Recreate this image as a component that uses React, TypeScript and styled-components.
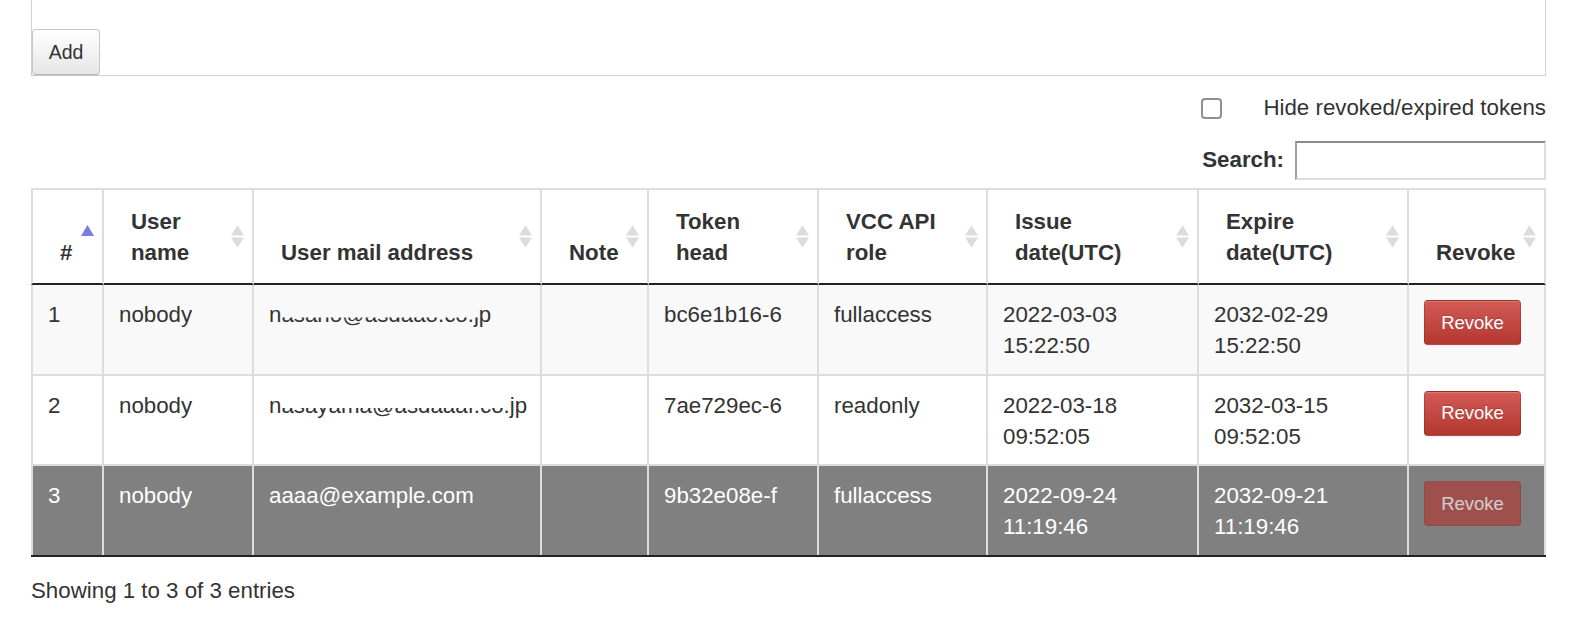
import React from "react";
import styled, { createGlobalStyle, css } from "styled-components";

const GlobalStyle = createGlobalStyle`
  html, body { margin: 0; padding: 0; background: #ffffff; }
  body {
    font-family: "Liberation Sans", Arial, Helvetica, sans-serif;
    color: #333333;
    font-size: 22.3px;
    line-height: 30.7px;
  }
`;

const Page = styled.div`
  width: 1515px;
  padding: 0 40px 0 31px;
`;

const AddPanel = styled.div`
  height: 75px;
  border: 1px solid #d0d0d0;
  border-top: none;
  display: flex;
  align-items: flex-end;
`;

const AddButton = styled.button`
  width: 68px;
  height: 46px;
  padding: 0;
  font-family: "Liberation Sans", Arial, sans-serif;
  font-size: 19.5px;
  color: #333333;
  background: linear-gradient(#ffffff, #e6e6e6);
  border: 1px solid #c8c8c8;
  border-bottom-color: #b5b5b5;
  border-radius: 4px;
  box-shadow: 0 1px 2px rgba(0, 0, 0, 0.06);
`;

const CheckRow = styled.label`
  display: flex;
  justify-content: flex-end;
  align-items: center;
  gap: 41px;
  height: 31px;
  margin-top: 17px;
`;

const CheckBox = styled.input`
  appearance: none;
  margin: 0;
  width: 21px;
  height: 21px;
  border: 2px solid #8e8e9c;
  border-radius: 4px;
  background: #ffffff;
  box-sizing: border-box;
`;

const SearchRow = styled.div`
  display: flex;
  justify-content: flex-end;
  align-items: center;
  gap: 11px;
  margin-top: 17px;
  height: 39px;
`;

const SearchLabel = styled.span`
  font-weight: bold;
`;

const SearchInput = styled.input`
  box-sizing: border-box;
  width: 251px;
  height: 39px;
  margin: 0;
  border-style: solid;
  border-width: 2px;
  border-color: #8a8a8a #dddddd #dddddd #a0a0a0;
  background: #ffffff;
  font: inherit;
`;

const Table = styled.table`
  margin-top: 8px;
  width: 1515px;
  table-layout: fixed;
  border-collapse: separate;
  border-spacing: 0;
  border-bottom: 2px solid #222222;
`;

const HeadCell = styled.th<{ $w: number }>`
  position: relative;
  box-sizing: border-box;
  width: ${(p) => p.$w}px;
  padding: 17px 30px 15px 27px;
  text-align: left;
  vertical-align: bottom;
  font-weight: bold;
  border-top: 2px solid #dddddd;
  border-right: 2px solid #dddddd;
  border-bottom: 2px solid #222222;
  &:first-child { border-left: 2px solid #dddddd; }
`;

const SortGlyph = styled.svg`
  position: absolute;
  right: 8px;
  top: 50%;
  margin-top: -11.5px;
`;

const Row = styled.tr<{ $tone: "odd" | "even" | "selected" }>`
  background: ${(p) =>
    p.$tone === "odd" ? "#f9f9f9" : p.$tone === "selected" ? "#808080" : "#ffffff"};
  color: ${(p) => (p.$tone === "selected" ? "#ffffff" : "#333333")};
  &:first-child td { border-top: none; }
`;

const Cell = styled.td`
  padding: 15px 15px 12px;
  vertical-align: top;
  border-top: 2px solid #dddddd;
  border-right: 2px solid #dddddd;
  &:first-child { border-left: 2px solid #dddddd; }
`;

const Mail = styled.span`
  white-space: nowrap;
`;

const Redacted = styled.span`
  display: inline-block;
  clip-path: inset(56% 0 0 0);
`;

const RevokeButton = styled.button<{ $disabled?: boolean }>`
  display: block;
  width: 97px;
  height: 45px;
  padding: 0;
  font-family: "Liberation Sans", Arial, sans-serif;
  font-size: 18.5px;
  color: #ffffff;
  border: 1px solid rgba(0, 0, 0, 0.15);
  border-radius: 4px;
  background: linear-gradient(#d35b56, #b3372f);
  text-shadow: 0 -1px 0 rgba(0, 0, 0, 0.2);
  box-shadow: inset 0 1px 0 rgba(255, 255, 255, 0.2), 0 1px 2px rgba(0, 0, 0, 0.05);
  ${(p) =>
    p.$disabled &&
    css`
      background: #b3342e;
      opacity: 0.62;
      box-shadow: none;
      text-shadow: none;
    `}
`;

const Info = styled.div`
  padding-top: 19px;
`;

const SortIcon: React.FC<{ asc?: boolean }> = ({ asc }) => (
  <SortGlyph width="13" height="23" viewBox="0 0 13 23">
    {asc ? (
      <path d="M6.5 0 L13 11 H0 Z" fill="#7b7be0" />
    ) : (
      <>
        <path d="M6.5 0.5 L13 10.5 H0 Z" fill="#dcdcdc" />
        <path d="M0 12.5 H13 L6.5 22.5 Z" fill="#dcdcdc" />
      </>
    )}
  </SortGlyph>
);

const columns: { label: string; w: number; asc?: boolean }[] = [
  { label: "#", w: 73, asc: true },
  { label: "User name", w: 150 },
  { label: "User mail address", w: 288 },
  { label: "Note", w: 107 },
  { label: "Token head", w: 170 },
  { label: "VCC API role", w: 169 },
  { label: "Issue date(UTC)", w: 211 },
  { label: "Expire date(UTC)", w: 210 },
  { label: "Revoke", w: 137 },
];

type Token = {
  id: number;
  user: string;
  mail: React.ReactNode;
  note: string;
  head: string;
  role: string;
  issued: string;
  expires: string;
  tone: "odd" | "even" | "selected";
};

const tokens: Token[] = [
  {
    id: 1,
    user: "nobody",
    mail: (
      <>
        n<Redacted>asano@asdaao.co.j</Redacted>p
      </>
    ),
    note: "",
    head: "bc6e1b16-6",
    role: "fullaccess",
    issued: "2022-03-03 15:22:50",
    expires: "2032-02-29 15:22:50",
    tone: "odd",
  },
  {
    id: 2,
    user: "nobody",
    mail: (
      <>
        n<Redacted>asayama@asdaaaf.co</Redacted>.jp
      </>
    ),
    note: "",
    head: "7ae729ec-6",
    role: "readonly",
    issued: "2022-03-18 09:52:05",
    expires: "2032-03-15 09:52:05",
    tone: "even",
  },
  {
    id: 3,
    user: "nobody",
    mail: "aaaa@example.com",
    note: "",
    head: "9b32e08e-f",
    role: "fullaccess",
    issued: "2022-09-24 11:19:46",
    expires: "2032-09-21 11:19:46",
    tone: "selected",
  },
];

export default function App() {
  return (
    <Page>
      <GlobalStyle />
      <AddPanel>
        <AddButton type="button">Add</AddButton>
      </AddPanel>
      <CheckRow>
        <CheckBox type="checkbox" />
        <span>Hide revoked/expired tokens</span>
      </CheckRow>
      <SearchRow>
        <SearchLabel>Search:</SearchLabel>
        <SearchInput type="search" />
      </SearchRow>
      <Table>
        <thead>
          <tr>
            {columns.map((c) => (
              <HeadCell key={c.label} $w={c.w}>
                {c.label}
                <SortIcon asc={c.asc} />
              </HeadCell>
            ))}
          </tr>
        </thead>
        <tbody>
          {tokens.map((t) => (
            <Row key={t.id} $tone={t.tone}>
              <Cell>{t.id}</Cell>
              <Cell>{t.user}</Cell>
              <Cell>
                <Mail>{t.mail}</Mail>
              </Cell>
              <Cell>{t.note}</Cell>
              <Cell>{t.head}</Cell>
              <Cell>{t.role}</Cell>
              <Cell>{t.issued}</Cell>
              <Cell>{t.expires}</Cell>
              <Cell>
                <RevokeButton type="button" $disabled={t.tone === "selected"}>
                  Revoke
                </RevokeButton>
              </Cell>
            </Row>
          ))}
        </tbody>
      </Table>
      <Info>Showing 1 to 3 of 3 entries</Info>
    </Page>
  );
}
